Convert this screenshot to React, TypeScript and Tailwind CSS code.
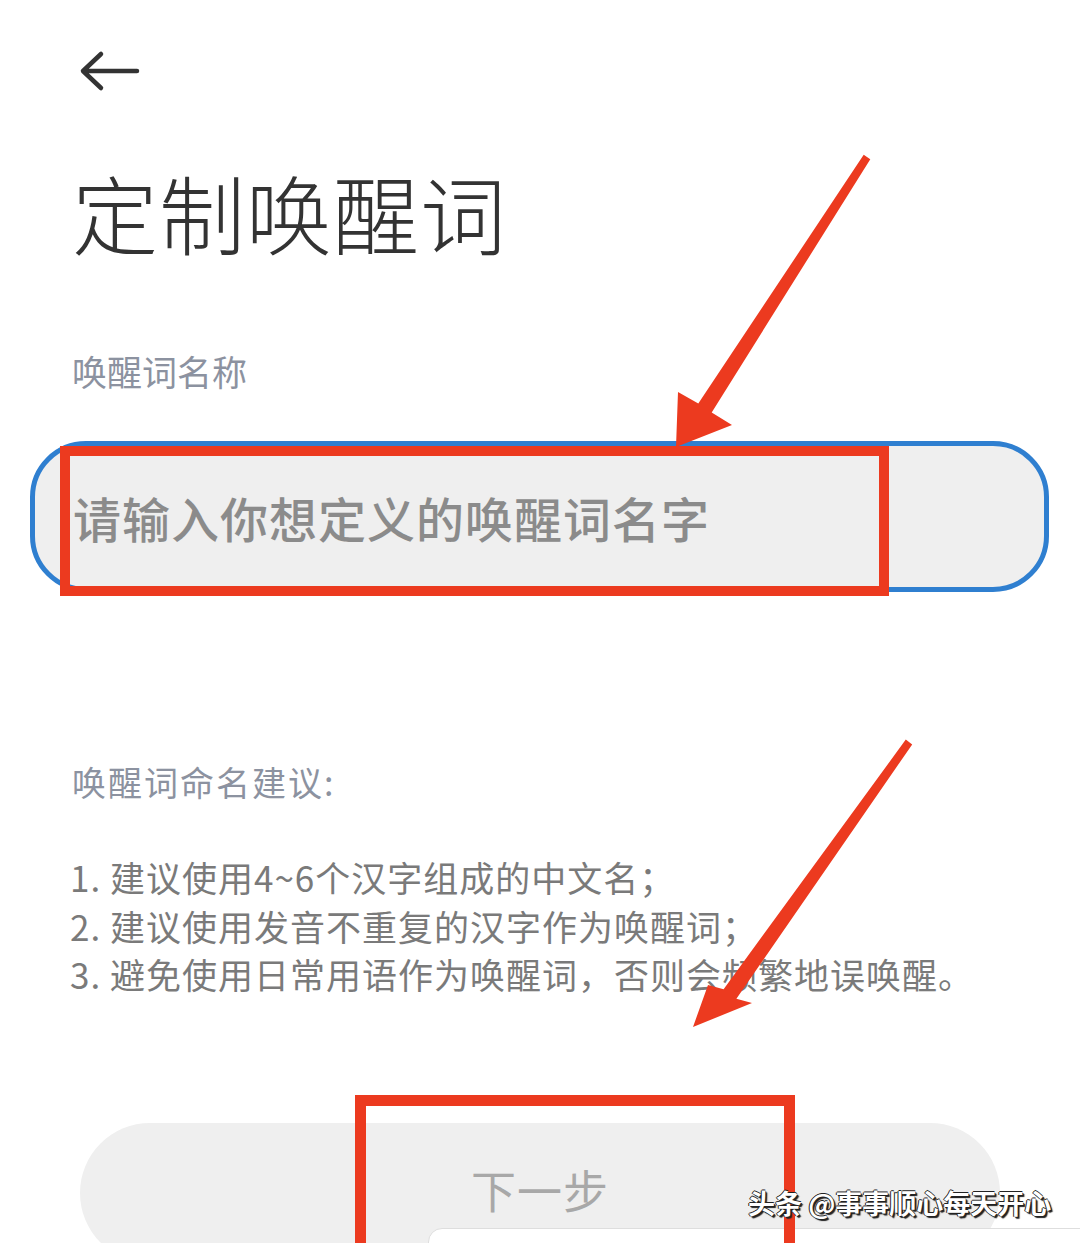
import React from 'react';

const tips = [
  '1. 建议使用4~6个汉字组成的中文名；',
  '2. 建议使用发音不重复的汉字作为唤醒词；',
  '3. 避免使用日常用语作为唤醒词，否则会频繁地误唤醒。',
];

export default function App() {
  return (
    <div className="relative w-[1080px] h-[1243px] overflow-hidden bg-white font-['Noto_Sans_CJK_SC',sans-serif]">
      <div className="flex flex-col items-start pl-[72px] pt-[48px]">
        {/* back */}
        <button className="ml-[6px]">
          <svg className="block" width="64" height="46" viewBox="0 0 64 46" fill="none">
            <path d="M59 23H5M23 6L5 23l18 17" stroke="#333" strokeWidth="4.5" strokeLinecap="round" strokeLinejoin="round" />
          </svg>
        </button>

        <h1 className="mt-[75px] text-[86px] leading-[86px] font-light tracking-[1px] text-[#333]">定制唤醒词</h1>

        <div className="mt-[98px] text-[35px] leading-[35px] text-[#8c92a0]">唤醒词名称</div>

        <div className="-ml-[42px] mt-[53px] w-[1019px] h-[151px] rounded-[56px] border-[5px] border-[#2f7fd0] bg-[#efefef] flex items-center pl-[38px]">
          <span className="text-[48px] font-medium tracking-[1px] text-[#8b8b8b]">请输入你想定义的唤醒词名字</span>
        </div>

        <div className="mt-[173px] text-[34px] leading-[34px] tracking-[2px] text-[#8c92a0]">唤醒词命名建议:</div>

        <div className="-ml-[2px] mt-[54px] flex flex-col text-[35px] leading-[48.5px] tracking-[1px] text-[#7a7a7a]">
          {tips.map((t) => (
            <div key={t}>{t}</div>
          ))}
        </div>

        <div className="ml-[8px] mt-[124px] w-[920px] h-[140px] rounded-[70px] bg-[#efefef] flex items-start justify-center pt-[44px]">
          <span className="text-[45px] leading-[45px] tracking-[1px] text-[#a8a8a8]">下一步</span>
        </div>
      </div>

      {/* bottom card peeking in */}
      <div className="absolute left-[428px] top-[1228px] w-[700px] h-[60px] rounded-tl-[14px] border border-[#dedede] bg-white" />

      {/* annotations */}
      <div className="absolute left-[60px] top-[446px] w-[829px] h-[150px] border-[10px] border-[#ec3a1f]" />
      <div className="absolute left-[355px] top-[1095px] w-[440px] h-[200px] border-[11px] border-[#ec3a1f]" />
      <svg className="absolute left-0 top-0" width="1080" height="1243" viewBox="0 0 1080 1243">
        <polygon
          points="863.7,154.8 870.3,159.2 711.7,412.4 732,425 676,447 678,392 698.3,403.6"
          fill="#ec3a1f"
        />
        <polygon
          points="905.8,739.6 912.2,744.4 736.4,998.8 752,1003 693,1027 708,985 723.6,989.2"
          fill="#ec3a1f"
        />
      </svg>

      <div className="absolute left-[748px] top-[1187px] text-[27px] leading-[32px] font-bold text-white [text-shadow:1px_1px_0_#222,-1px_0_0_#222,0_-1px_0_#222,2px_2px_1px_#222]">
        头条 @事事顺心每天开心
      </div>
    </div>
  );
}
